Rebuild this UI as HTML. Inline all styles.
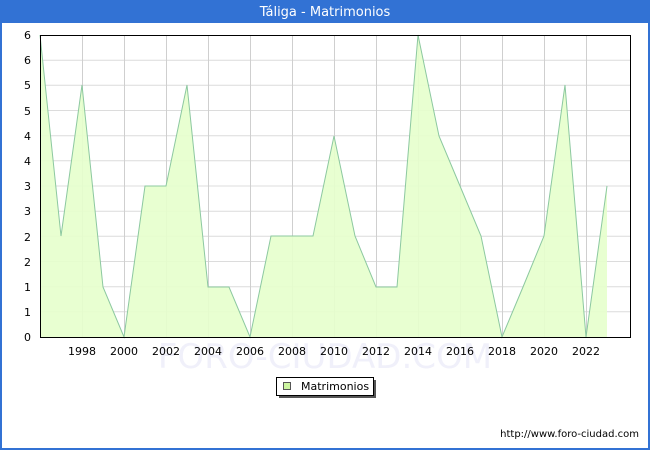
<!DOCTYPE html><html><head><style>body{margin:0;}svg text{font-family:"DejaVu Sans","Liberation Sans",sans-serif;}</style></head><body>
<svg width="650" height="450" xmlns="http://www.w3.org/2000/svg">
<rect x="0" y="0" width="650" height="450" fill="#3272d4"/>
<rect x="2" y="23" width="646" height="425" fill="#fff"/>
<text x="325" y="16" font-size="13" fill="#fff" text-anchor="middle">Táliga - Matrimonios</text>
<text x="325" y="368" font-size="34" fill="#f0f0fa" text-anchor="middle">FORO-CIUDAD.COM</text>
<g stroke="#dcdcdc" stroke-width="1">
<line x1="40" x2="630" y1="60.2" y2="60.2"/><line x1="40" x2="630" y1="85.3" y2="85.3"/><line x1="40" x2="630" y1="110.5" y2="110.5"/><line x1="40" x2="630" y1="135.7" y2="135.7"/><line x1="40" x2="630" y1="160.8" y2="160.8"/><line x1="40" x2="630" y1="186" y2="186"/><line x1="40" x2="630" y1="211.2" y2="211.2"/><line x1="40" x2="630" y1="236.3" y2="236.3"/><line x1="40" x2="630" y1="261.5" y2="261.5"/><line x1="40" x2="630" y1="286.7" y2="286.7"/><line x1="40" x2="630" y1="311.8" y2="311.8"/>
</g>
<g stroke="#cfcfcf" stroke-width="1">
<line x1="82.5" x2="82.5" y1="35" y2="337"/><line x1="124.5" x2="124.5" y1="35" y2="337"/><line x1="166.5" x2="166.5" y1="35" y2="337"/><line x1="208.5" x2="208.5" y1="35" y2="337"/><line x1="250.5" x2="250.5" y1="35" y2="337"/><line x1="292.5" x2="292.5" y1="35" y2="337"/><line x1="334.5" x2="334.5" y1="35" y2="337"/><line x1="376.5" x2="376.5" y1="35" y2="337"/><line x1="418.5" x2="418.5" y1="35" y2="337"/><line x1="460.5" x2="460.5" y1="35" y2="337"/><line x1="502.5" x2="502.5" y1="35" y2="337"/><line x1="544.5" x2="544.5" y1="35" y2="337"/><line x1="586.5" x2="586.5" y1="35" y2="337"/>
</g>
<polygon fill="#e6ffcc" fill-opacity="0.9" stroke="none" points="40,337 40,35 61,236 82,85 103,287 124,337 145,186 166,186 187,85 208,287 229,287 250,337 271,236 292,236 313,236 334,136 355,236 376,287 397,287 418,35 439,136 460,186 481,236 502,337 523,287 544,236 565,85 586,337 607,186 607,337"/>
<polyline fill="none" stroke="#8cc8a0" stroke-width="1" points="40,35 61,236 82,85 103,287 124,337 145,186 166,186 187,85 208,287 229,287 250,337 271,236 292,236 313,236 334,136 355,236 376,287 397,287 418,35 439,136 460,186 481,236 502,337 523,287 544,236 565,85 586,337 607,186"/>
<rect x="40.5" y="35.5" width="590" height="302" fill="none" stroke="#000" stroke-width="1"/>
<g font-size="11" fill="#000" text-anchor="end">
<text x="31" y="39">6</text><text x="31" y="64">6</text><text x="31" y="89">5</text><text x="31" y="115">5</text><text x="31" y="140">4</text><text x="31" y="165">4</text><text x="31" y="190">3</text><text x="31" y="215">3</text><text x="31" y="241">2</text><text x="31" y="266">2</text><text x="31" y="291">1</text><text x="31" y="316">1</text><text x="31" y="341">0</text>
</g>
<g font-size="11" fill="#000" text-anchor="middle">
<text x="82" y="355">1998</text><text x="124" y="355">2000</text><text x="166" y="355">2002</text><text x="208" y="355">2004</text><text x="250" y="355">2006</text><text x="292" y="355">2008</text><text x="334" y="355">2010</text><text x="376" y="355">2012</text><text x="418" y="355">2014</text><text x="460" y="355">2016</text><text x="502" y="355">2018</text><text x="544" y="355">2020</text><text x="586" y="355">2022</text>
</g>
<rect x="279" y="380" width="97" height="18" fill="#555"/>
<rect x="276.5" y="377.5" width="97" height="18" fill="#fff" stroke="#000" stroke-width="1"/>
<rect x="283.5" y="382.5" width="7" height="7" fill="#ccf5a0" stroke="#555" stroke-width="1"/>
<text x="301" y="390" font-size="11" fill="#000">Matrimonios</text>
<text x="639" y="437" font-size="10" fill="#000" text-anchor="end">http://www.foro-ciudad.com</text>
</svg>
</body></html>
